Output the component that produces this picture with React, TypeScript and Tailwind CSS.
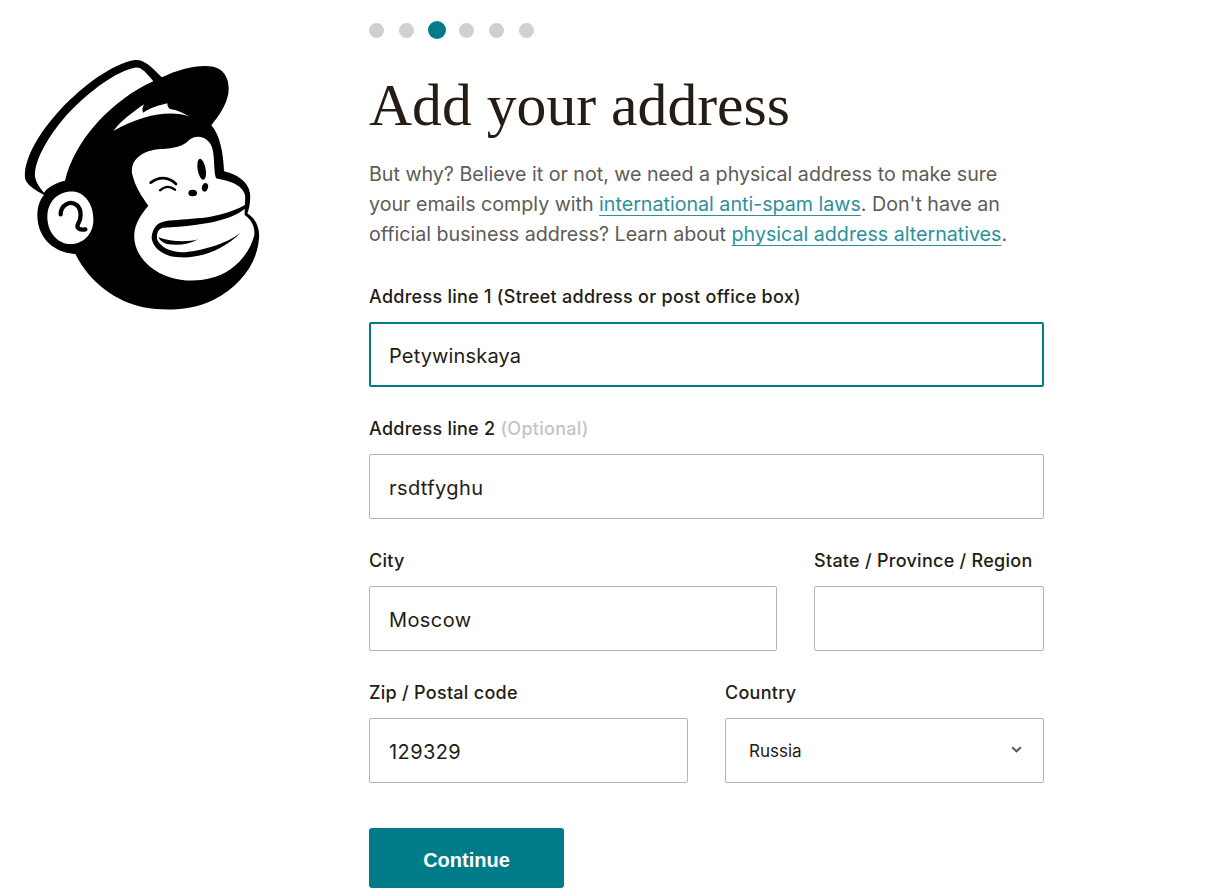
const dots = [false, false, true, false, false, false];

const inputClass =
  'block w-full h-[65px] border border-[#b5b5b5] rounded-[2px] px-[19px] pt-[2px] text-[20px] tracking-[0.4px] text-[#241c15] bg-white outline-none';

const Logo = () => (
  <svg viewBox="0 0 780 810" className="w-[260px] h-[270px] block">
    <path
      d="M45 385C40 330 85 250 150 180C220 105 310 40 375 30C400 28 420 45 455 82C510 55 570 42 610 50C645 58 660 90 655 130C650 165 625 200 604 226C630 255 640 310 642 364C680 372 715 395 720 430C722 455 718 475 712 490C735 505 750 530 747 565C742 640 690 710 610 750C550 780 470 785 400 772C320 755 240 700 196 612C150 610 105 585 88 535C75 490 85 455 102 435C75 420 50 405 45 385Z"
      fill="#000"
    />
    <path
      d="M76 385C68 345 105 270 170 195C235 125 320 62 375 53C395 50 410 70 430 94C370 120 310 165 260 220C215 270 180 330 165 392C140 397 115 410 102 428C90 415 80 400 76 385Z"
      fill="#fff"
    />
    <path
      d="M112 500C112 450 150 420 195 425C230 432 252 470 250 515C248 555 215 585 175 582C140 578 112 545 112 500Z"
      fill="#fff"
    />
    <path
      d="M152 493C152 465 180 450 200 465C218 480 212 510 205 520C198 532 205 542 226 538"
      fill="none"
      stroke="#000"
      strokeWidth="13"
      strokeLinecap="round"
    />
    <path
      d="M310 243C330 215 370 185 402 163C397 172 396 180 399 188C425 172 450 165 472 160C472 168 475 174 480 177C500 180 520 188 538 200C490 180 400 190 310 243Z"
      fill="#fff"
    />
    <path
      d="M366 370C362 335 385 310 430 300C470 294 510 300 540 268C565 252 595 262 606 292C615 320 610 360 618 385C650 392 695 400 705 435C707 455 703 475 704 495C725 510 735 530 733 555C720 610 670 670 600 685C540 700 470 690 420 650C385 620 370 585 373 550C375 520 395 490 415 467C395 440 375 410 366 370Z"
      fill="#fff"
    />
    <path
      d="M705 465C660 490 600 503 560 505C520 510 480 510 460 515C435 520 425 545 425 565C430 600 470 622 510 622C570 625 640 600 692 548C650 580 590 598 530 606C490 610 455 595 442 570C438 550 445 535 460 533C520 530 590 525 650 505C680 495 705 480 715 465Z"
      fill="#000"
    />
    <path d="M445 562C480 575 530 578 565 568C535 585 500 587 470 582C458 578 450 572 445 562Z" fill="#000" />
    <ellipse cx="575" cy="358" rx="12" ry="32" transform="rotate(-10 575 358)" fill="#000" />
    <ellipse cx="585" cy="412" rx="9" ry="13" transform="rotate(15 585 412)" fill="#000" />
    <ellipse cx="548" cy="429" rx="13" ry="10" fill="#000" />
    <path d="M422 398C445 380 475 378 498 402" fill="none" stroke="#000" strokeWidth="8" strokeLinecap="round" />
    <path d="M450 421C465 408 480 407 495 419" fill="none" stroke="#000" strokeWidth="7" strokeLinecap="round" />
  </svg>
);

const Field = ({ label, children, className }: { label: React.ReactNode; children: React.ReactNode; className?: string }) => (
  <div className={className}>
    <label className="block text-[18px] leading-[27px] tracking-[0.27px] font-medium text-[#241c15] mb-[12px]">
      {label}
    </label>
    {children}
  </div>
);

export default function App() {
  return (
    <div className="min-h-screen bg-white flex font-['Inter',sans-serif]">
      <div className="w-[369px] shrink-0 pt-[50px] pl-[10px]">
        <Logo />
      </div>
      <div className="w-[675px] pt-[21px]">
        <div className="flex items-center gap-[15px] h-[18px]">
          {dots.map((active, i) =>
            active ? (
              <span key={i} className="w-[18px] h-[18px] rounded-full bg-[#007c89] -mx-[1.5px]" />
            ) : (
              <span key={i} className="w-[15px] h-[15px] rounded-full bg-[#d0d0d0]" />
            ),
          )}
        </div>
        <h1 className="mt-[26px] font-['Liberation_Serif',serif] text-[59.7px] leading-[80px] text-[#241c15]">
          Add your address
        </h1>
        <p className="mt-[14px] text-[19.65px] leading-[30px] text-[#5f5b57]">
          But why? Believe it or not, we need a physical address to make sure your emails comply with{' '}
          <a href="#" className="text-[#2d919c] underline underline-offset-4 decoration-1">
            international anti-spam laws
          </a>
          . Don't have an official business address? Learn about{' '}
          <a href="#" className="text-[#2d919c] underline underline-offset-4 decoration-1">
            physical address alternatives
          </a>
          .
        </p>
        <form className="mt-[34px]">
          <Field label="Address line 1 (Street address or post office box)">
            <input
              defaultValue="Petywinskaya"
              className="block w-full h-[65px] border-2 border-[#007c89] rounded-[2px] px-[18px] pt-[2px] text-[20px] tracking-[0.15px] text-[#241c15] bg-white outline-none"
            />
          </Field>
          <Field
            className="mt-[28px]"
            label={
              <>
                Address line 2 <span className="text-[#c4c4c4]">(Optional)</span>
              </>
            }
          >
            <input defaultValue="rsdtfyghu" className={inputClass} />
          </Field>
          <div className="mt-[28px] flex gap-[37px]">
            <Field className="w-[408px]" label="City">
              <input defaultValue="Moscow" className={inputClass} />
            </Field>
            <Field className="w-[230px]" label="State / Province / Region">
              <input className={inputClass} />
            </Field>
          </div>
          <div className="mt-[28px] flex gap-[37px]">
            <Field className="w-[319px]" label="Zip / Postal code">
              <input defaultValue="129329" className={inputClass} />
            </Field>
            <Field className="w-[319px]" label="Country">
              <div className="relative">
                <select
                  defaultValue="Russia"
                  className="block w-full h-[65px] appearance-none border border-[#b5b5b5] rounded-[2px] pl-[23px] pr-[40px] pt-[3px] text-[17px] text-[#241c15] bg-white outline-none"
                >
                  <option>Russia</option>
                </select>
                <svg
                  viewBox="0 0 12 8"
                  className="absolute right-[22px] top-[28px] w-[11px] h-[7px]"
                  fill="none"
                  stroke="#5f5b57"
                  strokeWidth="2.4"
                >
                  <path d="M1 1.5l5 4.5 5-4.5" />
                </svg>
              </div>
            </Field>
          </div>
          <button
            type="button"
            className="mt-[45px] w-[195px] h-[60px] pt-[3px] bg-[#007c89] text-white font-['Liberation_Sans',sans-serif] text-[20px] font-bold rounded-[3px]"
          >
            Continue
          </button>
        </form>
      </div>
    </div>
  );
}
